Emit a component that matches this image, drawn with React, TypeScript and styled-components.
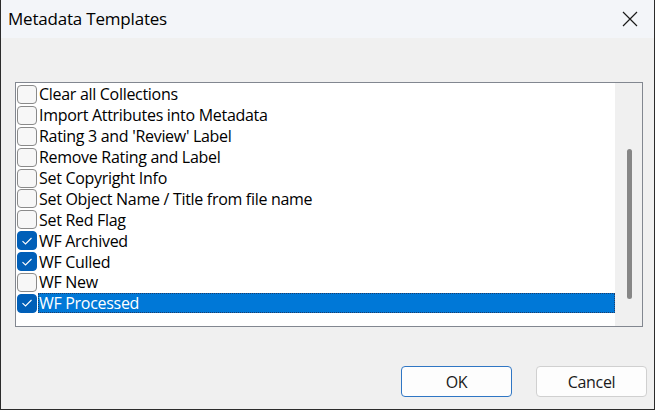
import React from "react";
import styled, { createGlobalStyle } from "styled-components";

const Global = createGlobalStyle`
  html, body { margin: 0; padding: 0; background: #f0f0f0; }
  * { box-sizing: border-box; }
`;

const Window = styled.div`
  width: 655px;
  height: 410px;
  display: flex;
  flex-direction: column;
  background: #f0f0f0;
  border-left: 1px solid #2b2b2b;
  border-right: 1px solid #2b2b2b;
  border-bottom: 1px solid #2b2b2b;
  font-family: "Open Sans", "Noto Sans", sans-serif;
  color: #000;
  overflow: hidden;
`;

const TitleBar = styled.div`
  height: 38px;
  flex: none;
  display: flex;
  align-items: center;
  justify-content: space-between;
  background: #f3f5f9;
  padding-left: 7px;
`;

const Title = styled.div`
  font-size: 17px;
  letter-spacing: -0.2px;
  margin-top: -2px;
`;

const CloseBtn = styled.div`
  width: 46px;
  height: 38px;
  display: flex;
  align-items: center;
  justify-content: center;
  margin-right: 1px;
`;

const Body = styled.div`
  flex: 1;
  display: flex;
  flex-direction: column;
  padding: 44px 11px 0 14px;
`;

const ListBox = styled.div`
  height: 245px;
  border: 1px solid #828790;
  background: #fff;
  display: flex;
`;

const Items = styled.div`
  flex: 1;
  padding-top: 1px;
  display: flex;
  flex-direction: column;
`;

const Row = styled.div`
  height: 20.9px;
  display: flex;
  align-items: center;
  padding-left: 1px;
`;

const Box = styled.div<{ $checked: boolean }>`
  width: 20px;
  height: 19px;
  border-radius: 4px;
  flex: none;
  border: 1px solid ${(p) => (p.$checked ? "#005fb8" : "#8a8a8a")};
  background: ${(p) => (p.$checked ? "#005fb8" : "#f7f7f7")};
  display: flex;
  align-items: center;
  justify-content: center;
`;

const Label = styled.div<{ $selected: boolean }>`
  flex: 1;
  height: 20px;
  margin-left: 1px;
  padding-left: 1px;
  display: flex;
  align-items: center;
  font-size: 16px;
  letter-spacing: -0.3px;
  white-space: nowrap;
  color: ${(p) => (p.$selected ? "#fff" : "#000")};
  background: ${(p) => (p.$selected ? "#0078d7" : "transparent")};
  outline: ${(p) => (p.$selected ? "1px dotted #1d3d6a" : "none")};
  outline-offset: -1px;
`;

const Scroll = styled.div`
  width: 27px;
  flex: none;
  background: #f0f0f0;
  display: flex;
  justify-content: center;
  padding-top: 66px;
`;

const Thumb = styled.div`
  width: 5px;
  height: 150px;
  border-radius: 3px;
  background: #868686;
  margin-left: 1px;
`;

const Footer = styled.div`
  display: flex;
  justify-content: flex-end;
  gap: 24px;
  margin-top: 39px;
  margin-right: -4px;
`;

const Button = styled.button<{ $default?: boolean }>`
  width: 111px;
  height: 31px;
  border-radius: 4px;
  background: #fdfdfd;
  border: 1px solid ${(p) => (p.$default ? "#2f76c4" : "#d0d0d0")};
  font-family: "Open Sans", "Noto Sans", sans-serif;
  font-size: 16px;
  letter-spacing: -0.3px;
  color: #1a1a1a;
  padding: 0;
`;

const items: [string, boolean][] = [
  ["Clear all Collections", false],
  ["Import Attributes into Metadata", false],
  ["Rating 3 and 'Review' Label", false],
  ["Remove Rating and Label", false],
  ["Set Copyright Info", false],
  ["Set Object Name / Title from file name", false],
  ["Set Red Flag", false],
  ["WF Archived", true],
  ["WF Culled", true],
  ["WF New", false],
  ["WF Processed", true],
];

export default function App() {
  return (
    <>
      <Global />
      <Window>
        <TitleBar>
          <Title>Metadata Templates</Title>
          <CloseBtn>
            <svg width="16" height="16" viewBox="0 0 16 16">
              <path d="M1 1 L15 15 M15 1 L1 15" stroke="#1a1a1a" strokeWidth="1.2" fill="none" />
            </svg>
          </CloseBtn>
        </TitleBar>
        <Body>
          <ListBox>
            <Items>
              {items.map(([t, c], i) => (
                <Row key={t}>
                  <Box $checked={c}>
                    {c && (
                      <svg width="12" height="10" viewBox="0 0 12 10">
                        <path d="M1.5 5.2 L4.5 8 L10.5 2" stroke="#fff" strokeWidth="1.1" fill="none" />
                      </svg>
                    )}
                  </Box>
                  <Label $selected={i === items.length - 1}>{t}</Label>
                </Row>
              ))}
            </Items>
            <Scroll>
              <Thumb />
            </Scroll>
          </ListBox>
          <Footer>
            <Button $default>OK</Button>
            <Button>Cancel</Button>
          </Footer>
        </Body>
      </Window>
    </>
  );
}
